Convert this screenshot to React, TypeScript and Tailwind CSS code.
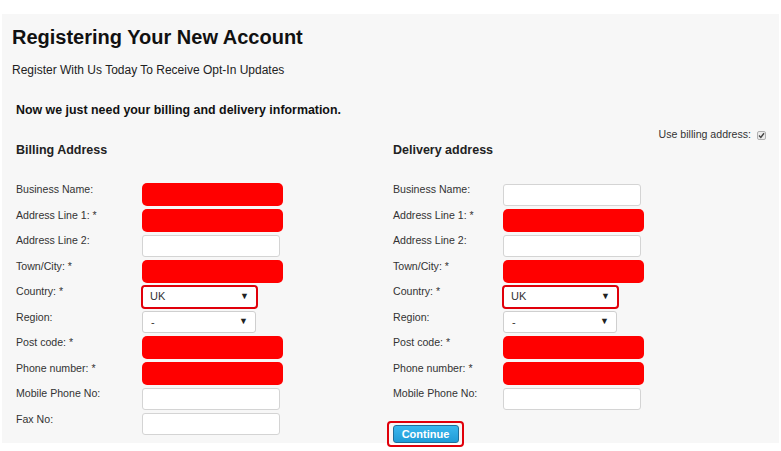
import React from 'react';

type Field = { label: string; kind: 'red' | 'input' | 'country' | 'region' };

const billing: Field[] = [
  { label: 'Business Name:', kind: 'red' },
  { label: 'Address Line 1: *', kind: 'red' },
  { label: 'Address Line 2:', kind: 'input' },
  { label: 'Town/City: *', kind: 'red' },
  { label: 'Country: *', kind: 'country' },
  { label: 'Region:', kind: 'region' },
  { label: 'Post code: *', kind: 'red' },
  { label: 'Phone number: *', kind: 'red' },
  { label: 'Mobile Phone No:', kind: 'input' },
  { label: 'Fax No:', kind: 'input' },
];

const delivery: Field[] = [
  { label: 'Business Name:', kind: 'input' },
  { label: 'Address Line 1: *', kind: 'red' },
  { label: 'Address Line 2:', kind: 'input' },
  { label: 'Town/City: *', kind: 'red' },
  { label: 'Country: *', kind: 'country' },
  { label: 'Region:', kind: 'region' },
  { label: 'Post code: *', kind: 'red' },
  { label: 'Phone number: *', kind: 'red' },
  { label: 'Mobile Phone No:', kind: 'input' },
];

function Select({ value, highlight }: { value: string; highlight?: boolean }) {
  const box = (
    <div className="w-[114px] h-[22px] bg-white border border-[#cfcfcf] rounded-[3px] flex items-center justify-between pl-[8px] pr-[7px] text-[11px] text-[#333]">
      <span>{value}</span>
      <span className="text-[9px] text-[#222]">▼</span>
    </div>
  );
  if (!highlight) return <div className="mt-[1.5px]">{box}</div>;
  return (
    <div className="mt-[0.5px] ml-[-1px] w-[117px] h-[24px] border-[2.5px] border-[#e0000a] rounded-[4px] flex items-center justify-center bg-white">
      <div className="w-[111px] h-[19px] bg-white flex items-center justify-between pl-[6px] pr-[6px] text-[11px] text-[#333]">
        <span>{value}</span>
        <span className="text-[9px] text-[#222]">▼</span>
      </div>
    </div>
  );
}

function Control({ kind }: { kind: Field['kind'] }) {
  if (kind === 'red') return <div className="mt-[1px] w-[141px] h-[23px] bg-[#ff0000] rounded-[5px]" />;
  if (kind === 'input')
    return <div className="mt-[1.5px] w-[138px] h-[22px] bg-white border border-[#d4d4d4] rounded-[3px]" />;
  if (kind === 'country') return <Select value="UK" highlight />;
  return <Select value="-" />;
}

function Rows({ fields, labelWidth }: { fields: Field[]; labelWidth: string }) {
  return (
    <div className="flex flex-col">
      {fields.map((f) => (
        <div key={f.label} className="flex h-[25.5px]">
          <div className={`${labelWidth} text-[10.6px] leading-[13px] text-[#333] pt-[1px]`}>{f.label}</div>
          <Control kind={f.kind} />
        </div>
      ))}
    </div>
  );
}

export default function App() {
  return (
    <div className="w-[781px] h-[451px] bg-white pt-[14px] font-['Liberation_Sans',Arial,sans-serif] text-[#111] overflow-hidden">
      <div className="ml-[2px] w-[777px] h-[429px] bg-[#f7f7f7] pl-[10px] pt-[11px]">
        <h1 className="text-[20px] leading-[24px] font-bold">Registering Your New Account</h1>
        <p className="mt-[14px] text-[12px] leading-[14px] text-[#222]">Register With Us Today To Receive Opt-In Updates</p>
        <h2 className="mt-[25px] ml-[4px] text-[12.4px] leading-[16px] font-bold">
          Now we just need your billing and delivery information.
        </h2>
        <div className="flex mt-[11px] ml-[4px]">
          <div className="w-[377px] pt-[12px]">
            <h3 className="text-[12.5px] leading-[16px] font-bold text-[#222] mt-[1px]">Billing Address</h3>
            <div className="mt-[24px]">
              <Rows fields={billing} labelWidth="w-[126px]" />
            </div>
          </div>
          <div className="w-[375px]">
            <div className="h-[12px] flex justify-end items-center gap-[6px] text-[10.6px] text-[#333]">
              <span>Use billing address:</span>
              <svg width="9" height="9" viewBox="0 0 9 9" className="mr-[2px]">
                <rect x="0.5" y="0.5" width="8" height="8" rx="1.5" fill="#ececec" stroke="#b0b0b0" />
                <path d="M2 4.6 L3.8 6.4 L7 2.3" fill="none" stroke="#444" strokeWidth="1.4" />
              </svg>
            </div>
            <h3 className="text-[12.5px] leading-[16px] font-bold text-[#222] mt-[1px]">Delivery address</h3>
            <div className="mt-[24px]">
              <Rows fields={delivery} labelWidth="w-[110px]" />
            </div>
            <div className="mt-[9.5px] ml-[-6px] w-[77px] h-[26px] border-[2.5px] border-[#e0000a] rounded-[4px] flex items-center justify-center">
              <button className="w-[66px] h-[18px] rounded-[3px] border border-[#1e6e9a] bg-gradient-to-b from-[#3ab8ee] to-[#1f9bd6] text-white text-[11px] font-bold leading-[16px]">
                Continue
              </button>
            </div>
          </div>
        </div>
      </div>
    </div>
  );
}
